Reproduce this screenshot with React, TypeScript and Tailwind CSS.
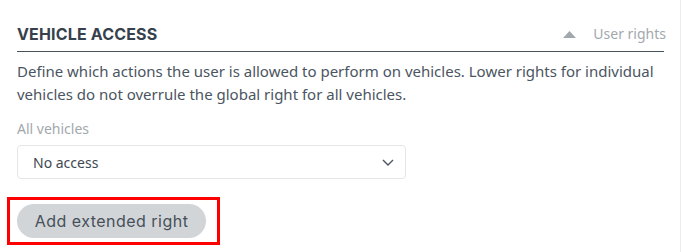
export default function App() {
  return (
    <div className="w-[681px] h-[252px] border-r border-[#ececec] bg-white font-['Noto_Sans',sans-serif]">
      <div className="pl-[17px] pr-[16px] pt-[24px]">
        {/* section header */}
        <div className="flex items-end justify-between border-b border-[#48525c] pb-[7px]">
          <h2 className="font-['Inter',sans-serif] text-[16px] leading-[20px] font-bold tracking-[0.01em] text-[#36414c]">
            VEHICLE ACCESS
          </h2>
          <div className="-mr-[2px] flex items-center gap-[17px] text-[14px] leading-[20px] text-[#a3a8ad]">
            <svg width="13" height="7" viewBox="0 0 13 7" className="mt-[1px]">
              <path d="M6.5 0L13 7H0z" fill="#a3a8ad" />
            </svg>
            <span>User rights</span>
          </div>
        </div>

        <p className="mt-[8px] text-[15px] leading-[23px] text-[#4a5561]">
          Define which actions the user is allowed to perform on vehicles. Lower rights for individual
          vehicles do not overrule the global right for all vehicles.
        </p>

        <div className="mt-[13px] text-[14px] leading-[20px] text-[#a3a8ad]">All vehicles</div>

        <div className="mt-[6px] flex h-[34px] w-[389px] items-center justify-between rounded-[4px] border border-[#e3e5e8] pl-[15px] pr-[11px] text-[14px] text-[#3e4852]">
          <span>No access</span>
          <svg width="12" height="7" viewBox="0 0 12 7" fill="none">
            <path d="M1 1l5 5 5-5" stroke="#4a5561" strokeWidth="1.4" />
          </svg>
        </div>

        <div className="-ml-[10px] mt-[18px] flex h-[48px] w-[213px] items-center border-[3px] border-[#ff0000] pl-[7px]">
          <button className="h-[34px] w-[189px] rounded-full bg-[#d2d5d8] font-['Inter',sans-serif] text-[16px] tracking-[0.03em] text-[#46505a]">
            Add extended right
          </button>
        </div>
      </div>
    </div>
  );
}
